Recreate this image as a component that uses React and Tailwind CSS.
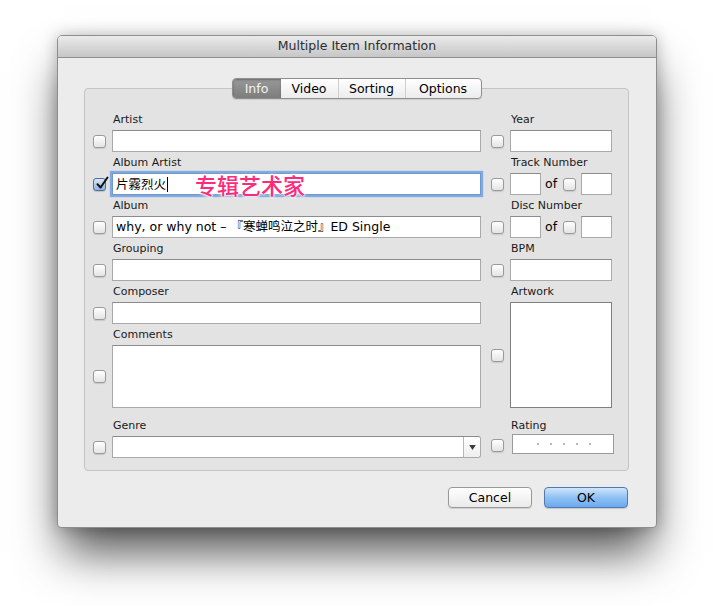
import React from "react";

const FONT = { fontFamily: '"Lucida Grande", "DejaVu Sans", "Noto Sans CJK SC", sans-serif' };

function Check({ checked = false }) {
  if (checked) {
    return (
      <div className="relative w-[13px] h-[13px] shrink-0 rounded-[3px] border border-[#4f6f9c] bg-gradient-to-b from-[#dbe8f7] to-[#8cb2e2] shadow-[0_1px_1px_rgba(0,0,0,0.15)]">
        <svg viewBox="0 0 14 14" className="absolute left-[1px] -top-[3px] w-[14px] h-[14px]">
          <path d="M2.5 8.2 L5.6 11.5 L12.5 1.5" fill="none" stroke="#111" strokeWidth="2" strokeLinecap="round" strokeLinejoin="round" />
        </svg>
      </div>
    );
  }
  return (
    <div className="w-[13px] h-[13px] shrink-0 rounded-[3px] border border-[#9a9a9a] bg-gradient-to-b from-white to-[#e4e4e4] shadow-[0_1px_1px_rgba(0,0,0,0.12)]" />
  );
}

function Label({ children }) {
  return (
    <div className="h-[18px] pt-[1px] pl-[20px] text-[11px] leading-[14px] text-[#1a1a1a]">{children}</div>
  );
}

const inputCls =
  "h-[22px] bg-white border border-[#a9a9a9] border-t-[#8c8c8c] text-[12.5px] leading-[20px] px-[3px] text-black whitespace-nowrap overflow-hidden";

function Field({ label, children, w = "w-[369px]", checked }) {
  return (
    <div className="flex flex-col">
      <Label>{label}</Label>
      <div className="flex items-center gap-[6px]">
        <Check checked={checked} />
        {children ? children : <div className={`${inputCls} ${w}`} />}
      </div>
    </div>
  );
}

function RightField({ label, children }) {
  return (
    <div className="flex flex-col">
      <Label>{label}</Label>
      <div className="flex items-center gap-[6px]">
        <Check />
        {children ? children : <div className={`${inputCls} w-[102px]`} />}
      </div>
    </div>
  );
}

function NumField({ label }) {
  return (
    <RightField label={label}>
      <div className="flex items-center">
        <div className={`${inputCls} w-[31px]`} />
        <span className="ml-[4px] w-[13px] text-[12.5px] leading-[16px] text-black">of</span>
        <div className="ml-[5px]">
          <Check />
        </div>
        <div className={`${inputCls} w-[31px] ml-[5px]`} />
      </div>
    </RightField>
  );
}

export default function App() {
  return (
    <div className="w-[713px] h-[606px] bg-white pt-[35px] pl-[57px]" style={FONT}>
      <div className="w-[600px] h-[493px] flex flex-col rounded-t-[5px] rounded-b-[4px] border border-[#8d8d8d] bg-[#ececec] overflow-hidden shadow-[0_30px_44px_-6px_rgba(0,0,0,0.68),0_0_16px_rgba(0,0,0,0.25)]">
        {/* title bar */}
        <div className="h-[22px] shrink-0 flex items-center justify-center bg-gradient-to-b from-[#ebebeb] to-[#c6c6c6] border-b border-[#8f8f8f] text-[12.5px] text-[#2e2e2e]">
          Multiple Item Information
        </div>
        {/* body */}
        <div className="flex flex-col pt-[20px] pl-[26px] pr-[27px]">
          {/* tabs */}
          <div className="relative z-10 flex justify-center h-[21px]">
            <div className="flex h-[21px] rounded-[4px] border border-[#8f8f8f] bg-gradient-to-b from-white to-[#ececec] overflow-hidden text-[12.5px] leading-[19px] shadow-[0_1px_1px_rgba(0,0,0,0.1)]">
              <div className="w-[48px] text-center bg-gradient-to-b from-[#999999] to-[#7d7d7d] text-[#f4f4f4] shadow-[inset_0_1px_2px_rgba(0,0,0,0.3)]">Info</div>
              <div className="w-[57px] text-center text-black">Video</div>
              <div className="w-[67px] text-center text-black border-l border-[#cfcfcf]">Sorting</div>
              <div className="w-[76px] text-center text-black border-l border-[#cfcfcf]">Options</div>
            </div>
          </div>
          {/* panel */}
          <div className="-mt-[11px] h-[383px] rounded-[4px] border border-[#c4c4c4] bg-[#e3e3e3] pt-[23px] pl-[8px] flex gap-[10px]">
            {/* left column */}
            <div className="flex flex-col gap-[3px]">
              <Field label="Artist" />
              <Field label="Album Artist" checked>
                <div className="relative w-[369px] h-[22px] bg-white border border-[#6f97cf] shadow-[0_0_1px_2px_rgba(110,160,225,0.85)] text-[12.5px] leading-[20px] px-[3px] text-black flex items-center" style={{ fontFamily: '"Noto Sans CJK SC", "DejaVu Sans", sans-serif' }}>
                  <span>片霧烈火</span>
                  <span className="w-px h-[15px] bg-black ml-px" />
                  <span className="absolute left-[82px] top-1/2 -translate-y-1/2 text-[22px] leading-[26px] font-medium text-[#ff2a7a] [text-shadow:0_0_2px_#fff,0_0_2px_#fff,0_0_3px_#fff,0_0_4px_#fff]">
                    专辑艺术家
                  </span>
                </div>
              </Field>
              <Field label="Album">
                <div className={`${inputCls} w-[369px]`} style={{ fontFamily: '"DejaVu Sans", "Noto Sans CJK SC", sans-serif' }}>
                  why, or why not – 『寒蝉鸣泣之时』ED Single
                </div>
              </Field>
              <Field label="Grouping" />
              <Field label="Composer" />
              <div className="flex flex-col">
                <Label>Comments</Label>
                <div className="flex items-center gap-[6px]">
                  <Check />
                  <div className="w-[369px] h-[63px] bg-white border border-[#a9a9a9] border-t-[#8c8c8c]" />
                </div>
              </div>
              <div className="mt-[7px]">
                <Field label="Genre">
                  <div className="w-[369px] h-[22px] flex bg-white border border-[#a9a9a9] border-t-[#8c8c8c] rounded-r-[3px]">
                    <div className="flex-1" />
                    <div className="w-[17px] border-l border-[#b5b5b5] bg-gradient-to-b from-white to-[#eeeeee] rounded-r-[3px] flex items-center justify-center">
                      <svg viewBox="0 0 8 6" className="w-[7px] h-[5px]">
                        <path d="M0 0 H8 L4 6 Z" fill="#3a3a3a" />
                      </svg>
                    </div>
                  </div>
                </Field>
              </div>
            </div>
            {/* right column */}
            <div className="flex flex-col gap-[3px]">
              <RightField label="Year" />
              <NumField label="Track Number" />
              <NumField label="Disc Number" />
              <RightField label="BPM" />
              <RightField label="Artwork">
                <div className="w-[102px] h-[106px] bg-white border border-[#7f7f7f]" />
              </RightField>
              <div className="mt-[7px]">
                <RightField label="Rating">
                  <div className="ml-[2px] w-[102px] h-[20px] mt-[-2px] bg-white border border-[#9a9a9a] flex items-center pl-[24px] gap-[11px]">
                    <span className="w-[2px] h-[2px] bg-[#b8b8b8]" />
                    <span className="w-[2px] h-[2px] bg-[#b8b8b8]" />
                    <span className="w-[2px] h-[2px] bg-[#b8b8b8]" />
                    <span className="w-[2px] h-[2px] bg-[#b8b8b8]" />
                    <span className="w-[2px] h-[2px] bg-[#b8b8b8]" />
                  </div>
                </RightField>
              </div>
            </div>
          </div>
          {/* buttons */}
          <div className="mt-[16px] flex justify-end gap-[12px] pr-px">
            <div className="w-[84px] h-[21px] rounded-[4px] border border-[#989898] bg-gradient-to-b from-white to-[#eaeaea] text-center text-[12.5px] leading-[19px] text-black shadow-[0_1px_1px_rgba(0,0,0,0.12)]">
              Cancel
            </div>
            <div className="w-[84px] h-[21px] rounded-[4px] border border-[#5479ad] bg-gradient-to-b from-[#cfe5fb] via-[#90c1f3] to-[#6aaaf0] text-center text-[12.5px] leading-[19px] text-black shadow-[0_1px_1px_rgba(0,0,0,0.15)]">
              OK
            </div>
          </div>
        </div>
      </div>
    </div>
  );
}
